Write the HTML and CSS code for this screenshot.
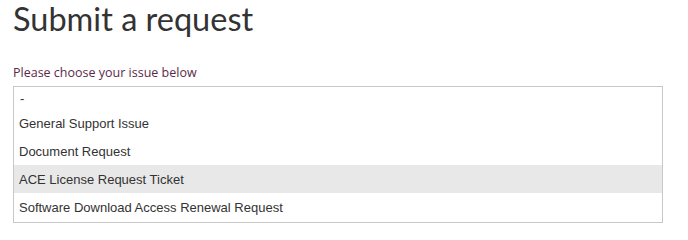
FILE: index.html
```html
<!DOCTYPE html>
<html>
<head>
<meta charset="utf-8">
<link rel="stylesheet" href="styles.css">
</head>
<body>
<div class="page">
  <h1 class="title">Submit a request</h1>
  <div class="field">
    <label class="label">Please choose your issue below</label>
    <ul class="listbox">
      <li class="option option-empty">-</li>
      <li class="option">General Support Issue</li>
      <li class="option">Document Request</li>
      <li class="option option-hover">ACE License Request Ticket</li>
      <li class="option">Software Download Access Renewal Request</li>
    </ul>
  </div>
</div>
</body>
</html>
```
FILE: styles.css
```css
html, body {
  margin: 0;
  padding: 0;
  background: #ffffff;
}
.page {
  padding-left: 13px;
  width: 650px;
}
.title {
  margin: 0;
  font-family: Lato, "Open Sans", sans-serif;
  font-weight: 400;
  font-size: 32.5px;
  line-height: 37px;
  color: #333333;
}
.field {
  margin-top: 27px;
  display: flex;
  flex-direction: column;
}
.label {
  font-family: "Open Sans", sans-serif;
  font-size: 12.5px;
  line-height: 18px;
  color: #5b2a4a;
}
.listbox {
  list-style: none;
  margin: 4px 0 0 0;
  padding: 0 0 1px 0;
  border: 1px solid #c8c8c8;
  font-family: "Liberation Sans", Arial, sans-serif;
  font-size: 13px;
  color: #333333;
}
.option {
  padding-left: 5px;
  padding-top: 2px;
  height: 26px;
  line-height: 26px;
}
.option-empty {
  height: 20px;
  line-height: 20px;
  padding-left: 6px;
}
.option-hover {
  background: #e8e8e8;
}
```
